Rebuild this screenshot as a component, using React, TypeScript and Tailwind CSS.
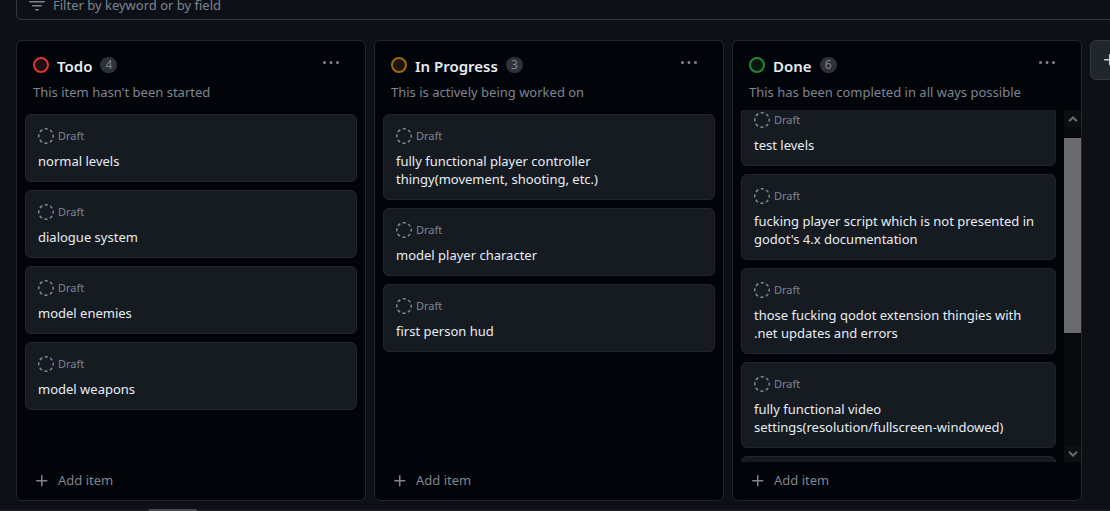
import type { ReactNode } from "react";
import clsx from "clsx";

type Column = {
  title: string;
  count: number;
  description: string;
  ring: string;
  items: string[];
  scrolled?: boolean;
};

const columns: Column[] = [
  {
    title: "Todo",
    count: 4,
    description: "This item hasn't been started",
    ring: "border-[#da3633] bg-[#1f0d11]",
    items: ["normal levels", "dialogue system", "model enemies", "model weapons"],
  },
  {
    title: "In Progress",
    count: 3,
    description: "This is actively being worked on",
    ring: "border-[#9e6a03] bg-[#1d160c]",
    items: [
      "fully functional player controller thingy(movement, shooting, etc.)",
      "model player character",
      "first person hud",
    ],
  },
  {
    title: "Done",
    count: 6,
    description: "This has been completed in all ways possible",
    ring: "border-[#238636] bg-[#07190f]",
    items: [
      "test levels",
      "fucking player script which is not presented in godot's 4.x documentation",
      "those fucking qodot extension thingies with .net updates and errors",
      "fully functional video settings(resolution/fullscreen-windowed)",
      "",
    ],
    scrolled: true,
  },
];

function Icon({ children }: { children: ReactNode }) {
  return (
    <svg viewBox="0 0 16 16" fill="currentColor" aria-hidden="true" className="size-4 shrink-0">
      {children}
    </svg>
  );
}

function PlusIcon() {
  return (
    <Icon>
      <path d="M7.75 2a.75.75 0 0 1 .75.75V7h4.25a.75.75 0 0 1 0 1.5H8.5v4.25a.75.75 0 0 1-1.5 0V8.5H2.75a.75.75 0 0 1 0-1.5H7V2.75A.75.75 0 0 1 7.75 2Z" />
    </Icon>
  );
}

function Card({ title }: { title: string }) {
  return (
    <article className="min-h-[68px] shrink-0 rounded-md border border-[#21262d] bg-[#161b22] px-3 py-[11px]">
      {title && (
        <>
          <div className="flex h-5 items-center gap-1 text-[11px] text-[#7d8590]">
            <Icon>
              <circle
                cx="8"
                cy="8"
                r="7.25"
                fill="none"
                stroke="currentColor"
                strokeWidth="1.5"
                strokeDasharray="3.2 2.494"
                strokeDashoffset="1.6"
              />
            </Icon>
            Draft
          </div>
          <h3 className="mt-1.5 text-[13px] leading-[18px] text-[#e6edf3]">{title}</h3>
        </>
      )}
    </article>
  );
}

function Scrollbar() {
  return (
    <div className="flex w-[17px] shrink-0 flex-col bg-[#08090d] text-[#6b6b6f]" aria-hidden="true">
      <div className="flex h-[17px] items-center justify-center bg-[#0d0e12]">
        <svg viewBox="0 0 10 6" className="w-2.5" fill="none" stroke="currentColor" strokeWidth="2">
          <path d="M1 5.2 5 1.4l4 3.8" />
        </svg>
      </div>
      <div className="flex flex-1 flex-col pt-[11px]">
        <div className="h-[195px] bg-[#6b6b6f]" />
      </div>
      <div className="flex h-[17px] items-center justify-center bg-[#0d0e12]">
        <svg viewBox="0 0 10 6" className="w-2.5" fill="none" stroke="currentColor" strokeWidth="2">
          <path d="M1 .8 5 4.6 9 .8" />
        </svg>
      </div>
    </div>
  );
}

function BoardColumn({ title, count, description, ring, items, scrolled }: Column) {
  return (
    <section className="flex w-[350px] shrink-0 flex-col overflow-hidden rounded-md border border-[#21262d] bg-[#010409]">
      <header className="px-4 pt-3">
        <div className="flex h-6 items-center">
          <span className={clsx("size-4 rounded-full border-2", ring)} />
          <h2 className="ml-2 pt-0.5 text-[15px] leading-6 font-semibold text-[#e6edf3]">{title}</h2>
          <span className="ml-2 flex h-4 min-w-[17px] items-center justify-center rounded-full bg-[#2d3139] text-xs text-[#7d8590]">
            {count}
          </span>
          <button type="button" aria-label={`More options for ${title}`} className="mr-2.5 mb-1 ml-auto text-[#7d8590]">
            <Icon>
              <path d="M8 9a1.5 1.5 0 1 0 0-3 1.5 1.5 0 0 0 0 3ZM1.5 9a1.5 1.5 0 1 0 0-3 1.5 1.5 0 0 0 0 3Zm13 0a1.5 1.5 0 1 0 0-3 1.5 1.5 0 0 0 0 3Z" />
            </Icon>
          </button>
        </div>
        <p className="mt-[5px] text-[13px] leading-5 text-[#7d8590]">{description}</p>
      </header>
      <div className="mt-2 flex min-h-0 flex-1">
        <div className="min-w-0 flex-1 overflow-hidden px-2">
          <div className={clsx("flex flex-col gap-2", scrolled ? "-mt-3" : "pt-1")}>
            {items.map((item, i) => (
              <Card key={i} title={item} />
            ))}
          </div>
        </div>
        {scrolled && <Scrollbar />}
      </div>
      <button type="button" className="flex h-[38px] items-center gap-2 px-[17px] text-[13px] text-[#7d8590]">
        <PlusIcon />
        Add item
      </button>
    </section>
  );
}

export default function App() {
  return (
    <div className="flex h-screen flex-col overflow-hidden bg-[#0d1117] font-['Noto_Sans',sans-serif]">
      <div className="-mt-3 -mr-2 ml-4 flex h-8 shrink-0 items-center gap-2 rounded-md border border-[#30363d] px-3 pt-1 text-[#7d8590]">
        <Icon>
          <path d="M.75 3h14.5a.75.75 0 0 1 0 1.5H.75a.75.75 0 0 1 0-1.5ZM3 7.75A.75.75 0 0 1 3.75 7h8.5a.75.75 0 0 1 0 1.5h-8.5A.75.75 0 0 1 3 7.75Zm3 4a.75.75 0 0 1 .75-.75h2.5a.75.75 0 0 1 0 1.5h-2.5a.75.75 0 0 1-.75-.75Z" />
        </Icon>
        <input
          type="text"
          aria-label="Filter by keyword or by field"
          placeholder="Filter by keyword or by field"
          className="min-w-0 flex-1 bg-transparent text-[13px] outline-none placeholder:text-[#7d8590]"
        />
      </div>
      <main className="flex min-h-0 flex-1 gap-2 overflow-hidden px-4 pt-5 pb-2">
        {columns.map((column) => (
          <BoardColumn key={column.title} {...column} />
        ))}
        <button
          type="button"
          aria-label="Add a new column"
          className="flex size-10 shrink-0 items-center justify-center rounded-md border border-[#30363d] bg-[#21262d] text-[#c9d1d9]"
        >
          <PlusIcon />
        </button>
      </main>
      <div className="h-0.5 shrink-0 bg-[#191a1d]" aria-hidden="true">
        <div className="ml-[149px] h-full w-12 bg-[#48494c]" />
      </div>
    </div>
  );
}
